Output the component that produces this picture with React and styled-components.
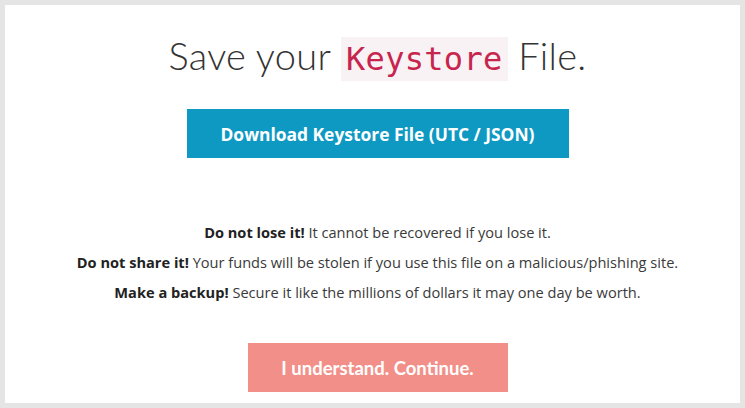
import React from 'react'
import styled, { createGlobalStyle } from 'styled-components'

const Global = createGlobalStyle`
  html, body {
    margin: 0;
    padding: 0;
    background: #e5e5e5;
  }
  body {
    font-family: Lato, "Open Sans", sans-serif;
    color: #333;
  }
`

const Card = styled.div`
  margin: 5px;
  height: 398px;
  box-sizing: border-box;
  background: #fff;
  display: flex;
  flex-direction: column;
  align-items: center;
  padding: 25px 0 0 10px;
`

const Title = styled.h1`
  margin: 0;
  font-size: 38px;
  font-weight: 300;
  line-height: 50px;
  color: #333;
  letter-spacing: 0.3px;
`

const Code = styled.code`
  font-family: "DejaVu Sans Mono", "Liberation Mono", monospace;
  font-size: 32px;
  color: #c7254e;
  background: #f9f2f4;
  padding: 3px 5px;
`

const Button = styled.button`
  border: 0;
  margin: ${p => p.$mt}px 0 0;
  width: ${p => p.$w}px;
  height: 49px;
  background: ${p => p.$bg};
  color: #fff;
  font-family: ${p => p.$font};
  font-weight: 700;
  font-size: ${p => p.$fs}px;
  cursor: pointer;
`

const Notes = styled.div`
  margin-top: 59px;
  text-align: center;
  font-family: "Open Sans", Lato, sans-serif;
  font-size: 14.6px;
  line-height: 30px;
  color: #3a3a3a;
  p {
    margin: 0;
  }
  strong {
    font-weight: 700;
    color: #222;
  }
`

export default function App() {
  return (
    <>
      <Global />
      <Card>
        <Title>
          Save your <Code>Keystore</Code> File.
        </Title>
        <Button $mt={25} $w={382} $bg="#0e99c3" $fs={17.4} $font={'"Open Sans", Lato, sans-serif'}>
          Download Keystore File (UTC / JSON)
        </Button>
        <Notes>
          <p><strong>Do not lose it!</strong> It cannot be recovered if you lose it.</p>
          <p><strong>Do not share it!</strong> Your funds will be stolen if you use this file on a malicious/phishing site.</p>
          <p><strong>Make a backup!</strong> Secure it like the millions of dollars it may one day be worth.</p>
        </Notes>
        <Button $mt={36} $w={260} $bg="#f28f89" $fs={18.5} $font={'Lato, "Open Sans", sans-serif'}>
          I understand. Continue.
        </Button>
      </Card>
    </>
  )
}
